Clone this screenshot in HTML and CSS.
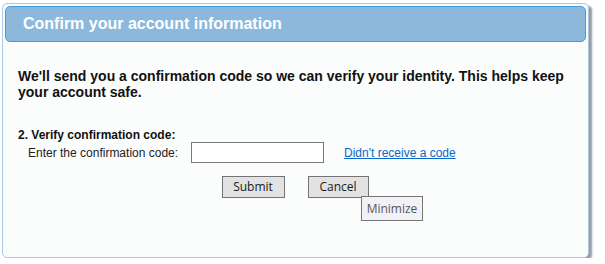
FILE: index.html
```html
<!DOCTYPE html>
<html>
<head>
<meta charset="utf-8">
<link rel="stylesheet" href="styles.css">
</head>
<body>
<div class="dialog">
  <div class="header">Confirm your account information</div>
  <div class="content">
    <p class="intro">We'll send you a confirmation code so we can verify your identity. This helps keep your account safe.</p>
    <p class="step">2. Verify confirmation code:</p>
    <div class="code-row">
      <label class="code-label" for="code">Enter the confirmation code:</label>
      <input class="code-input" id="code" type="text">
      <a class="resend" href="#">Didn't receive a code</a>
    </div>
    <div class="actions">
      <button class="btn btn-submit" type="button">Submit</button>
      <button class="btn btn-cancel" type="button">Cancel</button>
      <span class="tooltip">Minimize</span>
    </div>
  </div>
</div>
</body>
</html>
```

FILE: styles.css
```css
html, body {
  margin: 0;
  padding: 0;
  background: #ffffff;
}

body {
  font-family: "Liberation Sans", Arial, sans-serif;
  color: #000;
  padding: 3px 0 0 2px;
}

.dialog {
  box-sizing: border-box;
  width: 587px;
  height: 255px;
  border: 1px solid #a6c9e6;
  border-radius: 5px;
  background: #fbfdfd;
  padding: 2px;
  box-shadow: 4px 2px 2px -1px #9a9a9a;
}

.header {
  box-sizing: border-box;
  height: 36px;
  border: 1px solid #429ce0;
  border-radius: 5px;
  background: #8cb8dc;
  color: #ffffff;
  font-size: 16px;
  font-weight: bold;
  line-height: 34px;
  padding-left: 17px;
}

.content {
  padding-left: 13px;
}

.intro {
  margin: 26px 0 0 0;
  font-size: 14px;
  font-weight: bold;
  line-height: 16px;
  color: #111;
}

.step {
  margin: 28px 0 0 0;
  font-size: 12px;
  font-weight: bold;
  line-height: 14px;
  color: #111;
}

.code-row {
  display: flex;
  align-items: center;
  margin-top: 0;
  height: 21px;
}

.code-label {
  margin-left: 10px;
  font-size: 12px;
  line-height: 14px;
  color: #222;
  width: 163px;
}

.code-input {
  box-sizing: border-box;
  width: 133px;
  height: 21px;
  margin: 0;
  border: 1px solid #7a7a7a;
  background: #fff;
  padding: 0 3px;
}

.resend {
  margin-left: 20px;
  font-size: 12px;
  line-height: 14px;
  color: #0a66c8;
  text-decoration: underline;
}

.actions {
  position: relative;
  display: flex;
  justify-content: center;
  gap: 23px;
  margin-top: 13px;
  padding-right: 14px;
}

.btn {
  box-sizing: border-box;
  height: 22px;
  margin: 0;
  padding: 0;
  border: 1px solid #737373;
  background: #e2e2e2;
  font-family: "Open Sans", "DejaVu Sans", sans-serif;
  font-size: 12px;
  color: #1a1a1a;
  line-height: 18px;
}

.btn-submit {
  width: 63px;
}

.btn-cancel {
  width: 61px;
}

.tooltip {
  position: absolute;
  left: 343px;
  top: 20px;
  box-sizing: border-box;
  width: 62px;
  height: 25px;
  border: 1px solid #767676;
  background: #f1f1f7;
  color: #575757;
  font-family: "Open Sans", "DejaVu Sans", sans-serif;
  font-size: 12px;
  line-height: 23px;
  text-align: center;
}
```
